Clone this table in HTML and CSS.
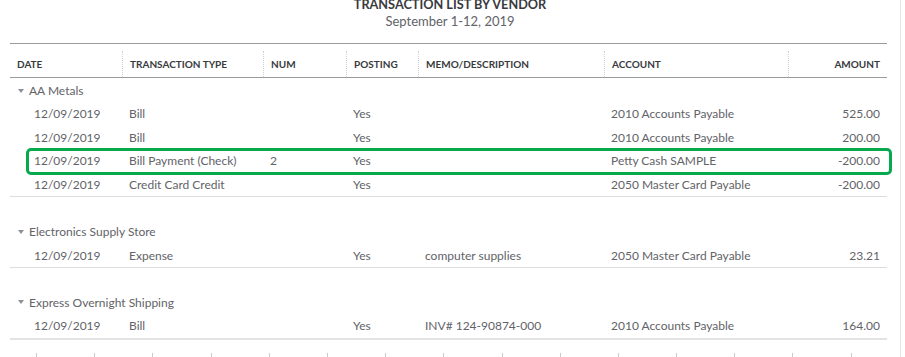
FILE: index.html
```html
<!DOCTYPE html>
<html>
<head>
<meta charset="utf-8">
<link rel="stylesheet" href="styles.css">
</head>
<body>
<div class="page">
  <div class="report-head">
    <div class="report-title">TRANSACTION LIST BY VENDOR</div>
    <div class="report-sub">September 1-12, 2019</div>
  </div>
  <div class="report">
    <div class="row thead">
      <div class="c">DATE</div>
      <div class="c sep">TRANSACTION TYPE</div>
      <div class="c sep">NUM</div>
      <div class="c sep">POSTING</div>
      <div class="c sep">MEMO/DESCRIPTION</div>
      <div class="c sep">ACCOUNT</div>
      <div class="c sep num">AMOUNT</div>
    </div>

    <div class="group">
      <div class="group-name"><span class="caret"></span>AA Metals</div>
      <div class="row data">
        <div class="c date">12/09/2019</div><div class="c">Bill</div><div class="c"></div><div class="c">Yes</div><div class="c"></div><div class="c">2010 Accounts Payable</div><div class="c num">525.00</div>
      </div>
      <div class="row data">
        <div class="c date">12/09/2019</div><div class="c">Bill</div><div class="c"></div><div class="c">Yes</div><div class="c"></div><div class="c">2010 Accounts Payable</div><div class="c num">200.00</div>
      </div>
      <div class="row data highlight">
        <div class="c date">12/09/2019</div><div class="c">Bill Payment (Check)</div><div class="c">2</div><div class="c">Yes</div><div class="c"></div><div class="c">Petty Cash SAMPLE</div><div class="c num">-200.00</div>
      </div>
      <div class="row data">
        <div class="c date">12/09/2019</div><div class="c">Credit Card Credit</div><div class="c"></div><div class="c">Yes</div><div class="c"></div><div class="c">2050 Master Card Payable</div><div class="c num">-200.00</div>
      </div>
    </div>

    <div class="group spaced">
      <div class="group-name"><span class="caret"></span>Electronics Supply Store</div>
      <div class="row data">
        <div class="c date">12/09/2019</div><div class="c">Expense</div><div class="c"></div><div class="c">Yes</div><div class="c">computer supplies</div><div class="c">2050 Master Card Payable</div><div class="c num">23.21</div>
      </div>
    </div>

    <div class="group spaced last">
      <div class="group-name"><span class="caret"></span>Express Overnight Shipping</div>
      <div class="row data">
        <div class="c date">12/09/2019</div><div class="c">Bill</div><div class="c"></div><div class="c">Yes</div><div class="c">INV# 124-90874-000</div><div class="c">2010 Accounts Payable</div><div class="c num">164.00</div>
      </div>
    </div>
  </div>
  <div class="ticks">
    <span></span><span></span><span></span><span></span><span></span><span></span><span></span><span></span><span></span><span></span><span></span><span></span><span></span><span></span><span></span>
  </div>
</div>
</body>
</html>
```

FILE: styles.css
```css
html, body {
  margin: 0;
  padding: 0;
  background: #fff;
  overflow: hidden;
}
body {
  font-family: "Lato", "Open Sans", sans-serif;
  color: #626368;
}
.page {
  width: 901px;
  height: 357px;
  border-right: 1px solid #e6e7e9;
  box-sizing: border-box;
  overflow: hidden;
}
.report-head {
  text-align: center;
  margin-top: -3px;
}
.report-title {
  font-size: 12.7px;
  font-weight: 700;
  color: #393a3d;
  line-height: 14px;
}
.report-sub {
  font-size: 13px;
  line-height: 16px;
  margin-top: 2px;
  color: #626368;
}
.report {
  margin: 14px 0 0 10px;
  width: 877px;
  border-top: 1px solid #9a9b9e;
}
.row {
  display: grid;
  grid-template-columns: 112px 141px 83px 72px 186px 184px 99px;
  align-items: center;
}
.thead {
  height: 33px;
  border-bottom: 1px solid #9a9b9e;
  font-size: 10px;
  font-weight: 700;
  color: #393a3d;
  align-items: end;
}
.thead .c {
  height: 25px;
  display: flex;
  align-items: center;
  padding-bottom: 1px;
}
.thead .c.sep {
  border-left: 1px dotted #cfd0d2;
}
.thead .c.num {
  justify-content: flex-end;
}
.c {
  padding: 0 7px;
  white-space: nowrap;
  overflow: hidden;
}
.c.num {
  text-align: right;
}
.c.date {
  padding-left: 24px;
}
.data {
  height: 23.6px;
  font-size: 12px;
  position: relative;
}
.group {
  border-bottom: 1px solid #dcdddf;
}
.group.spaced {
  margin-top: 23px;
}
.group.last {
  border-bottom: 2px solid #e2e3e5;
}
.group-name {
  height: 23px;
  display: flex;
  align-items: center;
  font-size: 12px;
  padding-left: 8px;
  margin-top: 1px;
}
.caret {
  width: 0;
  height: 0;
  border-left: 3px solid transparent;
  border-right: 3px solid transparent;
  border-top: 4px solid #8d9096;
  margin-right: 5px;
}
.highlight::after {
  content: "";
  position: absolute;
  left: 16px;
  right: -5px;
  top: -1px;
  bottom: -2px;
  border: 3px solid #08a84f;
  border-radius: 5px;
  pointer-events: none;
}
.ticks {
  display: flex;
  gap: 57.2px;
  padding-left: 36px;
  margin-top: 13px;
}
.ticks span {
  width: 1px;
  height: 6px;
  background: #c9cacc;
}
```
